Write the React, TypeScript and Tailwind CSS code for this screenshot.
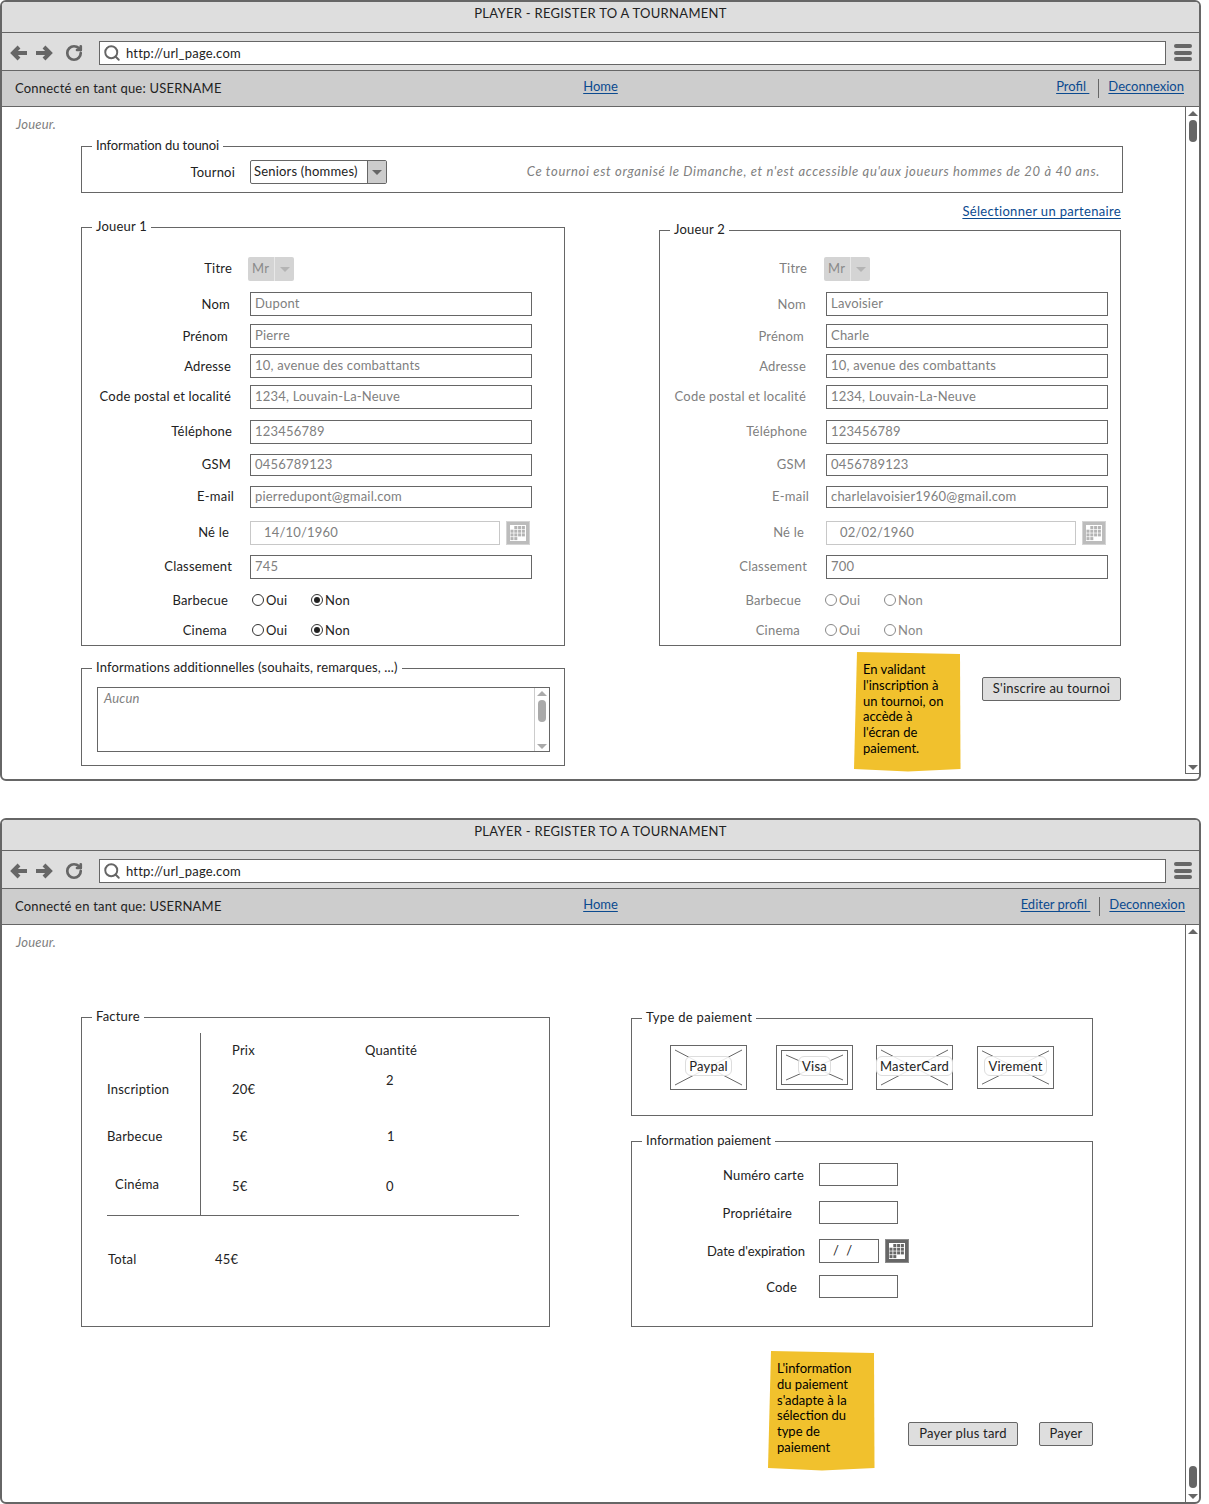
import type { ReactNode } from 'react';
import { RotateCw, Search } from 'lucide-react';
import clsx from 'clsx';

const playerRows = [
  { label: 'Nom', left: 'pr-[20px]', right: 'pr-[20px]', mt: 'mt-[11px]', h: 'h-[24px]', a: 'Dupont', b: 'Lavoisier' },
  { label: 'Prénom', left: 'pr-[22px]', right: 'pr-[22px]', mt: 'mt-[8px]', h: 'h-[24px]', a: 'Pierre', b: 'Charle' },
  { label: 'Adresse', left: 'pr-[19px]', right: 'pr-[20px]', mt: 'mt-[6px]', h: 'h-[24px]', a: '10, avenue des combattants', b: '10, avenue des combattants' },
  { label: 'Code postal et localité', left: 'pr-[19px] pb-[2px]', right: 'pr-[20px] pb-[2px]', mt: 'mt-[7px]', h: 'h-[24px]', a: '1234, Louvain-La-Neuve', b: '1234, Louvain-La-Neuve' },
  { label: 'Téléphone', left: 'pr-[18px] pb-[2px]', right: 'pr-[19px] pb-[2px]', mt: 'mt-[11px]', h: 'h-[24px]', a: '123456789', b: '123456789' },
  { label: 'GSM', left: 'pr-[19px] pb-[2px]', right: 'pr-[20px] pb-[2px]', mt: 'mt-[10px]', h: 'h-[22px]', a: '0456789123', b: '0456789123' },
  { label: 'E-mail', left: 'pr-[16px] pb-[2px]', right: 'pr-[17px] pb-[2px]', mt: 'mt-[10px]', h: 'h-[22px]', a: 'pierredupont@gmail.com', b: 'charlelavoisier1960@gmail.com' },
];

function Fieldset({ legend, legendClass, className, children }: { legend: string; legendClass?: string; className?: string; children?: ReactNode }) {
  return (
    <div className={clsx('relative border border-[#666] bg-white', className)}>
      <span className={clsx('absolute -top-[10px] left-[10px] bg-white px-[4px] text-[#222] whitespace-nowrap', legendClass)}>{legend}</span>
      {children}
    </div>
  );
}

function Triangle({ up, className }: { up?: boolean; className?: string }) {
  return (
    <svg width="10" height="5" viewBox="0 0 10 5" className={className}>
      <polygon points={up ? '5,0 10,5 0,5' : '0,0 10,0 5,5'} fill="currentColor" />
    </svg>
  );
}

function Calendar({ dark }: { dark?: boolean }) {
  const cells = [];
  for (let y = 0; y < 4; y++) {
    for (let x = 0; x < 4; x++) {
      if (y === 0 && x === 0) continue;
      if (y === 3 && x > 1) continue;
      cells.push(<rect key={`${x}-${y}`} x={4.5 + x * 3.8} y={5 + y * 3.7} width="3" height="3" fill={dark ? '#666' : '#b4b4b4'} />);
    }
  }
  return (
    <svg width="24" height="24" viewBox="0 0 24 24" className="shrink-0">
      <rect width="24" height="24" fill={dark ? '#8c8c8c' : '#d4d4d4'} />
      <rect x="1" y="1" width="22" height="22" fill={dark ? '#666' : '#bcbcbc'} />
      <rect x="4" y="4" width="16" height="16" fill="#fff" />
      {cells}
    </svg>
  );
}

function Radio({ label, checked, disabled, className }: { label: string; checked?: boolean; disabled?: boolean; className?: string }) {
  return (
    <div className={clsx('flex items-center gap-[2px]', disabled ? 'text-[#888]' : 'text-[#222]', className)}>
      <span className={clsx('flex h-[12px] w-[12px] items-center justify-center rounded-full border', disabled ? 'border-[#888]' : 'border-[#333]')}>
        {checked && <span className="h-[6px] w-[6px] rounded-full bg-[#222]" />}
      </span>
      {label}
    </div>
  );
}

function Input({ value, className }: { value?: string; className?: string }) {
  return (
    <div className={clsx('flex items-center border border-[#666] bg-white pb-[2px] pl-[4px] text-[#808080]', className)}>{value}</div>
  );
}

function PlayerForm({ side }: { side: 'left' | 'right' }) {
  const left = side === 'left';
  const labelCol = left ? 'w-[168px]' : 'w-[166px]';
  const labelColor = left ? 'text-[#222]' : 'text-[#808080]';
  return (
    <>
      <div className="flex h-[24px] items-center">
        <span className={clsx('pb-[3px] text-right', labelCol, labelColor, left ? 'pr-[18px]' : 'pr-[19px]')}>Titre</span>
        <div className="-ml-[2px] flex h-[24px] w-[46px] items-center rounded-[2px] bg-[#d4d4d4] pl-[4px] text-[#8a8a8a]">
          <span className="w-[22px] pb-[2px]">Mr</span>
          <span className="flex h-full flex-1 items-center justify-center border-l border-[#e8e8e8] text-[#b4b4b4]">
            <Triangle />
          </span>
        </div>
      </div>
      {playerRows.map((row) => (
        <div key={row.label} className={clsx('flex items-center', row.mt, row.h)}>
          <span className={clsx('text-right whitespace-nowrap', labelCol, labelColor, left ? row.left : row.right)}>{row.label}</span>
          <Input value={left ? row.a : row.b} className="h-full w-[282px]" />
        </div>
      ))}
      <div className="mt-[13px] flex h-[24px] items-center">
        <span className={clsx('pb-[2px] text-right', labelCol, labelColor, left ? 'pr-[21px]' : 'pr-[22px]')}>Né le</span>
        <div className="flex h-full w-[250px] items-center border border-[#c8c8c8] bg-white pb-[2px] pl-[13px] text-[#808080]">{left ? '14/10/1960' : '02/02/1960'}</div>
        <span className="ml-[6px]"><Calendar /></span>
      </div>
      <div className="mt-[10px] flex h-[24px] items-center">
        <span className={clsx('pb-[2px] text-right', labelCol, labelColor, left ? 'pr-[18px]' : 'pr-[19px]')}>Classement</span>
        <Input value={left ? '745' : '700'} className="h-full w-[282px]" />
      </div>
      {['Barbecue', 'Cinema'].map((label, i) => (
        <div key={label} className={clsx('flex h-[20px] items-center', i === 0 ? 'mt-[11px]' : 'mt-[10px]')}>
          <span className={clsx('text-right', labelCol, labelColor, left ? (i === 0 ? 'pr-[22px]' : 'pr-[23px]') : (i === 0 ? 'pr-[25px]' : 'pr-[26px]'))}>{label}</span>
          <Radio label="Oui" disabled={!left} className={left ? 'ml-[2px] w-[59px]' : '-ml-[1px] w-[59px]'} />
          <Radio label="Non" checked={left} disabled={!left} />
        </div>
      ))}
    </>
  );
}

function Note({ lines }: { lines: string[] }) {
  return (
    <div className="h-[120px] w-[107px] shrink-0 bg-[#f1c12d] pt-[10px] pl-[9px] leading-[15.8px] tracking-normal text-black [clip-path:polygon(3px_0,106px_2px,106.5px_117px,54px_119.5px,0_117px)]">
      {lines.map((l) => (
        <div key={l} className="whitespace-nowrap">{l}</div>
      ))}
    </div>
  );
}

function Button({ label, className }: { label: string; className?: string }) {
  return (
    <div className={clsx('flex h-[24px] items-center justify-center rounded-[2px] border border-[#666] bg-[#dedede] pb-[2px] text-[#222]', className)}>{label}</div>
  );
}

function Placeholder({ label, inner, className }: { label: string; inner?: boolean; className?: string }) {
  return (
    <div className={clsx('relative flex w-[77px] shrink-0 items-center justify-center border border-[#666] bg-white', className)}>
      <svg viewBox="0 0 75 43" preserveAspectRatio="none" className="absolute inset-0 h-full w-full">
        {inner ? (
          <>
            <rect x="4.5" y="4.5" width="66" height="34" fill="none" stroke="#666" />
            <path d="M9 9 L66 34 M66 9 L9 34" stroke="#666" />
          </>
        ) : (
          <path d="M4 4 L71 39 M71 4 L4 39" stroke="#666" />
        )}
      </svg>
      <span className="relative -mt-[4px] rounded-[6px] border border-[#ddd] bg-white/85 px-[3px] leading-[18px] whitespace-nowrap text-[#222]">{label}</span>
    </div>
  );
}

function Scrollbar({ thumbAtEnd, className }: { thumbAtEnd?: boolean; className?: string }) {
  return (
    <div className={clsx('flex w-[14px] shrink-0 flex-col items-center border-l border-[#666] text-[#666]', className)}>
      <Triangle up className="mt-[4px]" />
      <div className={clsx('h-[22px] w-[8px] rounded-[4px] bg-[#666]', thumbAtEnd ? 'mt-auto' : 'mt-[4px]')} />
      <Triangle className={thumbAtEnd ? 'mt-[6px] mb-[3px]' : 'mt-auto mb-[3px]'} />
    </div>
  );
}

function BackArrow({ flip }: { flip?: boolean }) {
  return (
    <svg width="18" height="16" viewBox="0 0 18 16" className={flip ? '-scale-x-100' : undefined}>
      <path d="M17 8 H4 M9 2 L3 8 L9 14" fill="none" stroke="#666" strokeWidth="4" />
    </svg>
  );
}

function Window({ nav, className, scrollClass, thumbAtEnd, children }: { nav: ReactNode; className?: string; scrollClass?: string; thumbAtEnd?: boolean; children: ReactNode }) {
  return (
    <div className={clsx('flex w-[1201px] flex-col overflow-hidden rounded-[6px] border-2 border-[#666] bg-white', className)}>
      <div className="flex h-[31px] shrink-0 justify-center border-b border-[#666] bg-[#dedede] pt-[3px] tracking-[0.3px] text-[#222]">PLAYER - REGISTER TO A TOURNAMENT</div>
      <div className="flex h-[38px] shrink-0 items-center border-b border-[#666] bg-[#dedede] pt-[2px] pl-[8px]">
        <BackArrow />
        <span className="ml-[7px]"><BackArrow flip /></span>
        <RotateCw size={18} strokeWidth={3.6} color="#666" className="ml-[12px]" />
        <div className="mt-[1px] ml-[16px] flex h-[24px] w-[1067px] items-center border border-[#666] bg-white pl-[3px] text-[#222]">
          <Search size={18} strokeWidth={2.6} color="#666" />
          <span className="ml-[5px]">http://url_page.com</span>
        </div>
        <div className="ml-[8px] flex w-[18px] flex-col gap-[2.5px]">
          <span className="h-[4px] rounded-[2px] bg-[#666]" />
          <span className="h-[4px] rounded-[2px] bg-[#666]" />
          <span className="h-[4px] rounded-[2px] bg-[#666]" />
        </div>
      </div>
      <div className="grid h-[36px] shrink-0 grid-cols-[1fr_auto_1fr] items-center border-b border-[#666] bg-[#cdcdcd]">
        <span className="pb-[2px] pl-[13px] text-[#222]">Connecté en tant que: USERNAME</span>
        <a className="mb-[5px] tracking-normal text-[#0b4a8f] underline underline-offset-2">Home</a>
        {nav}
      </div>
      <div className="flex min-h-0 flex-1">
        <div className="min-w-0 flex-1 pt-[9px]">
          <div className="pl-[14px] text-[#808080] italic">Joueur.</div>
          {children}
        </div>
        <Scrollbar thumbAtEnd={thumbAtEnd} className={scrollClass} />
      </div>
    </div>
  );
}

function NavLinks({ first, pr }: { first: string; pr: string }) {
  return (
    <div className={clsx('flex items-center justify-end tracking-normal text-[#0b4a8f]', pr)}>
      <a className="mb-[5px] underline underline-offset-2 whitespace-pre">{first} </a>
      <span className="mx-[9px] mb-[1px] h-[19px] w-px bg-[#666]" />
      <a className="mb-[5px] underline underline-offset-2">Deconnexion</a>
    </div>
  );
}

function RegisterScreen() {
  return (
    <Window className="h-[781px]" scrollClass="self-start h-[667px] border-b" nav={<NavLinks first="Profil" pr="pr-[15px]" />}>
      <div className="pl-[79px]">
        <Fieldset legend="Information du tounoi" legendClass="tracking-[-0.08px]" className="mt-[14px] flex h-[47px] w-[1042px] items-start pt-[13px]">
          <span className="w-[168px] pr-[15px] text-right leading-[24px] text-[#222]">Tournoi</span>
          <div className="flex h-[24px] w-[137px] items-center rounded-[2px] border border-[#666] bg-white pl-[3px] text-[#222]">
            <span className="flex-1 pb-[2px] whitespace-nowrap">Seniors (hommes)</span>
            <span className="flex h-full w-[19px] shrink-0 items-center justify-center border-l border-[#666] bg-[#ccc] text-[#666]"><Triangle /></span>
          </div>
          <span className="ml-auto pr-[22px] leading-[22px] tracking-[0.66px] text-[#808080] italic">Ce tournoi est organisé le Dimanche, et n'est accessible qu'aux joueurs hommes de 20 à 40 ans.</span>
        </Fieldset>
        <div className="mt-[10px] flex">
          <div className="w-[484px] pt-[24px]">
            <Fieldset legend="Joueur 1" className="h-[419px] pt-[29px]">
              <PlayerForm side="left" />
            </Fieldset>
            <Fieldset legend="Informations additionnelles (souhaits, remarques, ...)" legendClass="tracking-[0.14px]" className="mt-[22px] h-[98px] pt-[18px] pl-[15px]">
              <div className="flex h-[65px] w-[453px] border border-[#666]">
                <span className="flex-1 pt-[2px] pl-[6px] text-[#808080] italic">Aucun</span>
                <div className="flex w-[15px] flex-col items-center border-l border-[#ccc] text-[#aaa]">
                  <Triangle up className="mt-[3px]" />
                  <div className="mt-[4px] h-[22px] w-[8px] rounded-[4px] bg-[#aaa]" />
                  <Triangle className="mt-auto mb-[2px]" />
                </div>
              </div>
            </Fieldset>
          </div>
          <div className="ml-[94px] w-[462px]">
            <div className="flex h-[16px] justify-end tracking-[0.32px] text-[#0b4a8f]">
              <a className="underline underline-offset-2">Sélectionner un partenaire</a>
            </div>
            <Fieldset legend="Joueur 2" className="mt-[11px] h-[416px] pt-[26px]">
              <PlayerForm side="right" />
            </Fieldset>
            <div className="mt-[6px] flex items-start pl-[195px]">
              <Note lines={['En validant', "l'inscription à", 'un tournoi, on', 'accède à', "l'écran de", 'paiement.']} />
              <Button label="S'inscrire au tournoi" className="mt-[25px] ml-[21px] w-[139px]" />
            </div>
          </div>
        </div>
      </div>
    </Window>
  );
}

const payRows = [
  { label: 'Numéro carte', pr: 'pr-[15px]', mt: 'mt-[21px]' },
  { label: 'Propriétaire', pr: 'pr-[27px]', mt: 'mt-[15px]' },
];

function PaymentScreen() {
  return (
    <Window className="mt-[37px] h-[686px]" thumbAtEnd nav={<NavLinks first="Editer profil" pr="pr-[14px]" />}>
      <div className="pl-[79px]">
        <div className="mt-[67px] flex items-start text-[#222]">
          <Fieldset legend="Facture" className="h-[310px] w-[469px] pt-[15px] pl-[25px]">
            <div className="h-[183px] w-[412px] border-b border-[#666]">
              <div className="flex h-[37px]">
                <div className="w-[94px] border-r border-[#666]" />
                <div className="w-[119px] pt-[9px] pl-[31px]">Prix</div>
                <div className="pt-[9px] pl-[45px]">Quantité</div>
              </div>
              <div className="flex h-[40px]">
                <div className="w-[94px] border-r border-[#666] pt-[11px]">Inscription</div>
                <div className="w-[119px] pt-[11px] pl-[31px]">20€</div>
                <div className="pt-[2px] pl-[66px]">2</div>
              </div>
              <div className="flex h-[50px]">
                <div className="w-[94px] border-r border-[#666] pt-[18px]">Barbecue</div>
                <div className="w-[119px] pt-[18px] pl-[31px]">5€</div>
                <div className="pt-[18px] pl-[67px]">1</div>
              </div>
              <div className="flex h-[55px]">
                <div className="w-[94px] border-r border-[#666] pt-[16px] pl-[8px]">Cinéma</div>
                <div className="w-[119px] pt-[18px] pl-[31px]">5€</div>
                <div className="pt-[18px] pl-[66px]">0</div>
              </div>
            </div>
            <div className="mt-[35px] flex">
              <span className="w-[108px] pl-[1px]">Total</span>
              <span>45€</span>
            </div>
          </Fieldset>
          <div className="mt-[1px] ml-[81px] w-[462px]">
            <Fieldset legend="Type de paiement" legendClass="tracking-[0.3px]" className="flex h-[98px] items-start pt-[26px] pl-[38px]">
              <Placeholder label="Paypal" className="h-[45px]" />
              <Placeholder label="Visa" inner className="ml-[29px] h-[45px]" />
              <Placeholder label="MasterCard" className="ml-[23px] h-[45px]" />
              <Placeholder label="Virement" className="mt-[1px] ml-[24px] h-[43px]" />
            </Fieldset>
            <Fieldset legend="Information paiement" legendClass="tracking-[0.1px]" className="mt-[25px] h-[186px]">
              {payRows.map((row) => (
                <div key={row.label} className={clsx('flex h-[23px] items-center', row.mt)}>
                  <span className={clsx('w-[187px] text-right', row.pr)}>{row.label}</span>
                  <Input className="h-full w-[79px]" />
                </div>
              ))}
              <div className="mt-[15px] flex h-[24px] items-center">
                <span className="w-[187px] pr-[14px] text-right tracking-normal">Date d'expiration</span>
                <div className="h-full w-[60px] border border-[#666] pl-[13px] leading-[20px] whitespace-pre">/  /</div>
                <span className="ml-[6px]"><Calendar dark /></span>
              </div>
              <div className="mt-[12px] flex h-[23px] items-center">
                <span className="w-[187px] pr-[22px] text-right">Code</span>
                <Input className="h-full w-[79px]" />
              </div>
            </Fieldset>
          </div>
        </div>
        <div className="mt-[24px] flex items-start pl-[687px]">
          <Note lines={["L'information", 'du paiement', "s'adapte à la", 'sélection du', 'type de', 'paiement']} />
          <Button label="Payer plus tard" className="mt-[71px] ml-[33px] w-[110px]" />
          <Button label="Payer" className="mt-[71px] ml-[21px] w-[54px]" />
        </div>
      </div>
    </Window>
  );
}

export default function App() {
  return (
    <div className="h-[1504px] overflow-hidden bg-white font-['Lato',sans-serif] text-[13px] leading-[16px] tracking-[0.2px]">
      <RegisterScreen />
      <PaymentScreen />
    </div>
  );
}
